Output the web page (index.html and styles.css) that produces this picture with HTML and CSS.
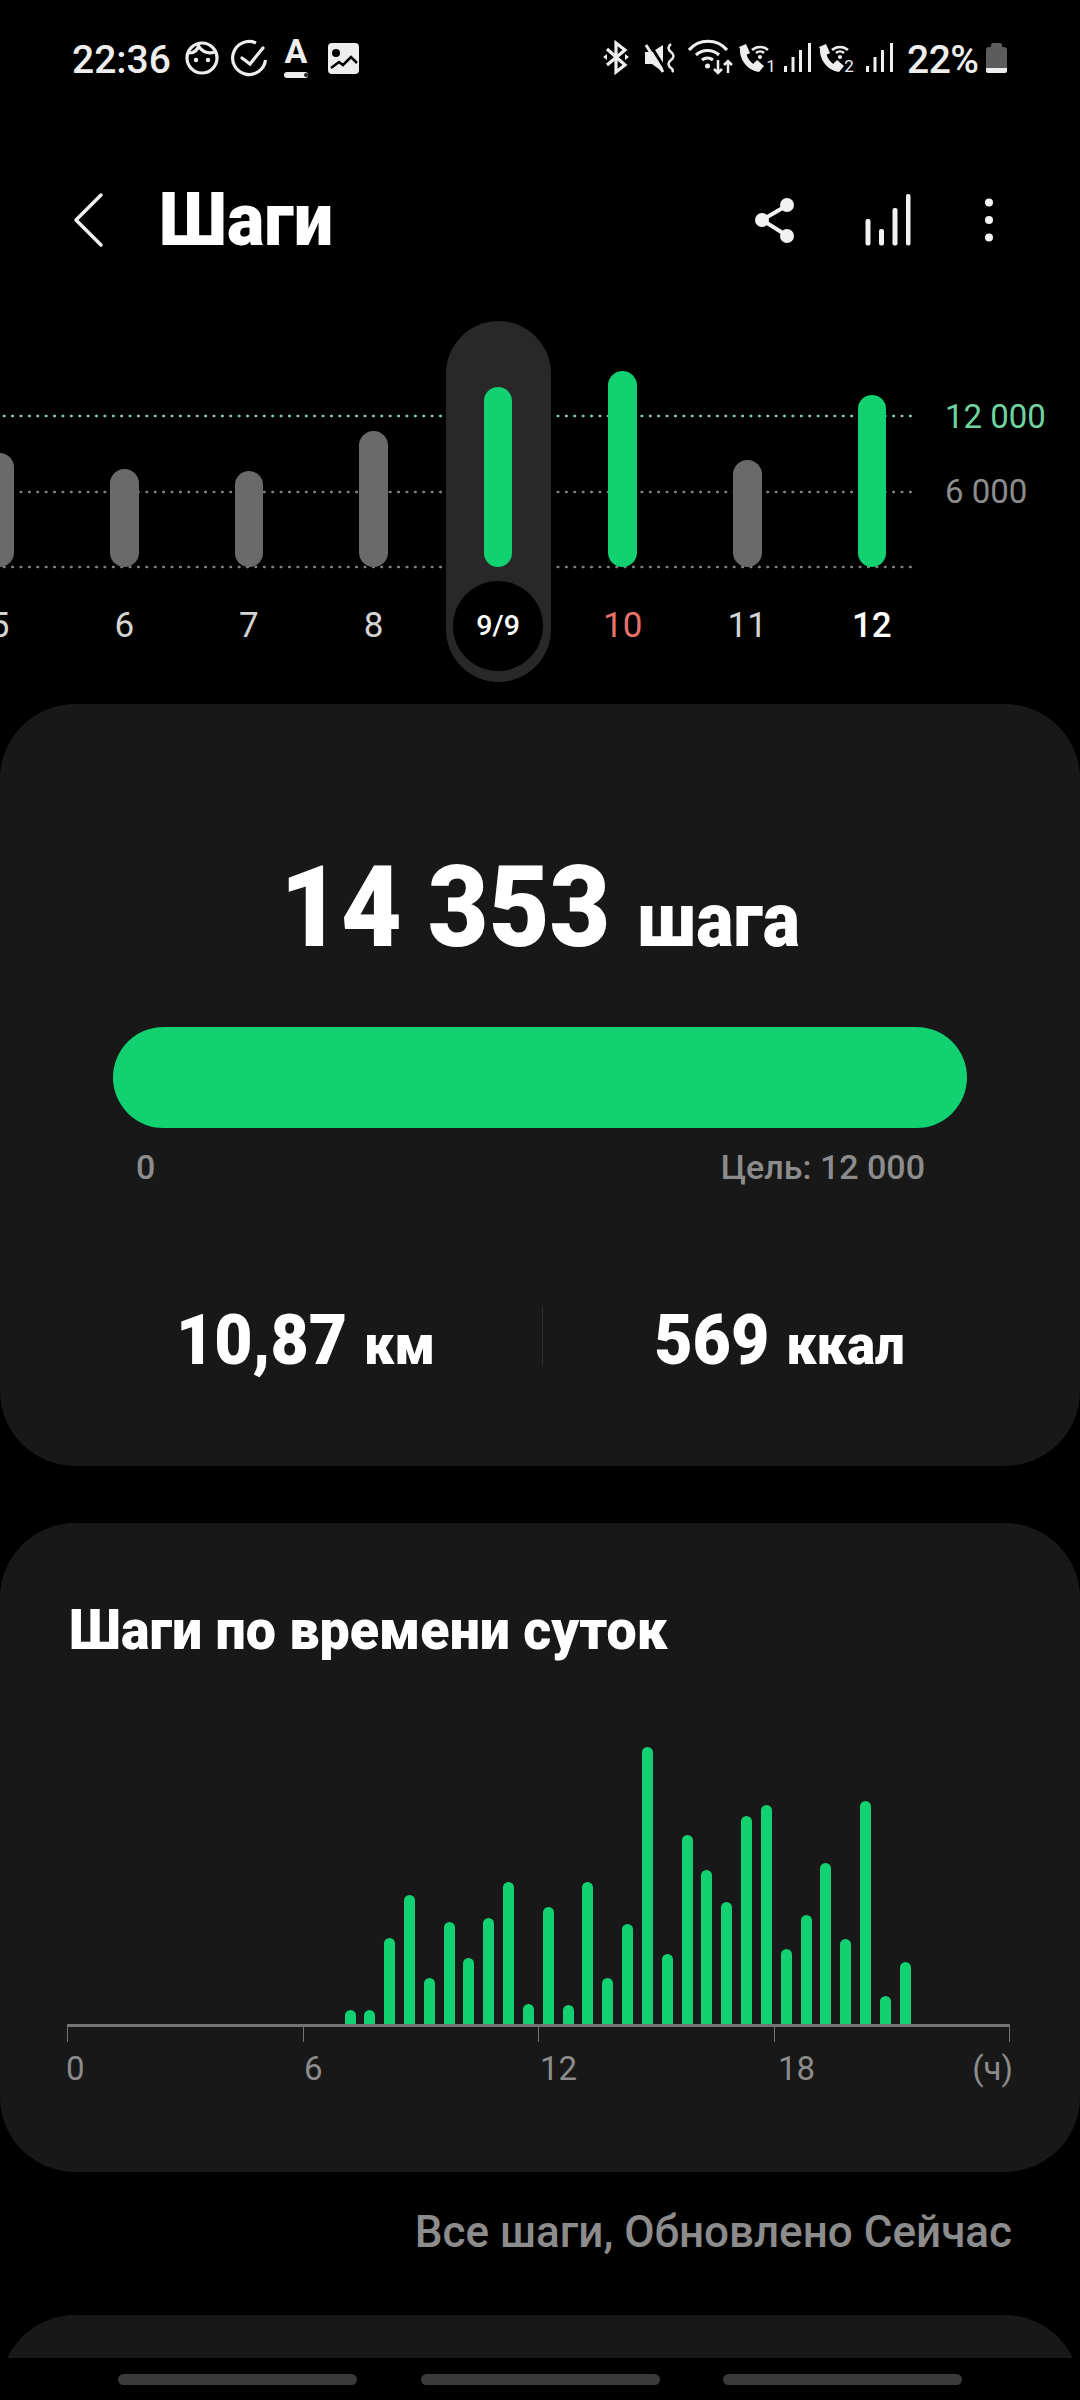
FILE: index.html
```html
<!DOCTYPE html>
<html lang="ru">
<head>
  <meta charset="UTF-8" />
  <title>Шаги</title>
  <meta name="viewport" content="width=device-width, initial-scale=1" />
  <link rel="stylesheet" href="styles.css">
</head>
<body>
  <div class="status">
    <div class="status-left">
      <span class="time">22:36</span>
      <svg class="ico" width="46" height="80" viewBox="178 20 46 80">
        <circle cx="202" cy="58" r="15" class="ln" />
        <path class="ln" d="M189 53C194 53 198 50 199 44M199 47C203 52 209 54 215 52" />
        <circle cx="196" cy="60" r="2.2" class="fl" />
        <circle cx="208" cy="60" r="2.2" class="fl" />
      </svg>
      <svg class="ico" width="51" height="80" viewBox="224 20 51 80">
        <path class="ln" d="M256 43A16.500 16.500 0 1 0 265.500 60" />
        <path class="ln" stroke-linecap="round" d="M242 58L250 64L263 48" />
      </svg>
      <svg class="ico" width="43" height="80" viewBox="275 20 43 80">
        <text x="296" y="63" text-anchor="middle" class="ico-a">A</text>
        <rect x="284" y="72" width="24" height="6" rx="3" class="fl" />
        <circle cx="306" cy="75" r="2" fill="#222" />
      </svg>
      <svg class="ico" width="42" height="80" viewBox="318 20 42 80">
        <rect x="328" y="43" width="31" height="31" rx="4" class="fl" />
        <circle cx="336" cy="53" r="4" fill="#000" />
        <path d="M331 68L339 62L343 65L351 57L357 63" fill="none" stroke="#000" stroke-width="2.500" />
      </svg>
    </div>
    <div class="status-right">
      <svg class="ico" width="41" height="80" viewBox="596 20 41 80">
        <path class="ln" d="M607 49L625 65L616 72V43L625 50L607 65" />
        <path class="fl" d="M603 57L607 54V60ZM629 57L625 54V60Z" />
      </svg>
      <svg class="ico" width="44" height="80" viewBox="637 20 44 80">
        <path class="fl" d="M645 52H652L663 45V72L652 64H645Z" />
        <path d="M649 43L667 72" stroke="#000" stroke-width="3" />
        <path d="M646 45L663 72" stroke="#eee" stroke-width="3" />
        <path class="ln-thin" d="M671 44Q666 48 671 52Q676 56 671 60Q666 64 671 68Q674 70 672 72" />
      </svg>
      <svg class="ico" width="54" height="80" viewBox="681 20 54 80">
        <path class="ln" d="M689 50A25 25 0 0 1 727 50M696 55A17 17 0 0 1 719 55M702 60A9 9 0 0 1 713 60" />
        <circle cx="707.500" cy="66" r="2.500" class="fl" />
        <path class="ln-thin" d="M718 60V73M714 69L718 73L722 69M728 73V61M724 65L728 61L732 65" />
      </svg>
      <svg class="ico" width="44" height="80" viewBox="735 20 44 80">
        <path class="ln-fat" d="M743 48C742 59 750 68 759 69" />
        <path class="fl" d="M739 47L746 44L750 53L744 56ZM752 65L757 60L764 66L759 72Z" />
        <path class="ln-thin" d="M752 50A12 12 0 0 1 768 50M756 53A6 6 0 0 1 764 53" />
        <circle cx="760" cy="57" r="2" class="fl" />
        <text x="771" y="72" text-anchor="middle" class="ico-n">1</text>
      </svg>
      <svg class="ico" width="36" height="80" viewBox="779 20 36 80">
        <path class="fl" d="M784 66h3v6h-3zM791.500 57h3v15h-3zM799 50h3v22h-3zM808 43h3v29h-3z" />
      </svg>
      <svg class="ico" width="46" height="80" viewBox="817 20 46 80">
        <path class="ln-fat" d="M825 48C824 59 832 68 841 69" />
        <path class="fl" d="M821 47L828 44L832 53L826 56ZM834 65L839 60L846 66L841 72Z" />
        <path class="ln-thin" d="M834 50A12 12 0 0 1 850 50M838 53A6 6 0 0 1 846 53" />
        <circle cx="842" cy="57" r="2" class="fl" />
        <text x="851" y="72" text-anchor="middle" class="ico-n">2</text>
      </svg>
      <svg class="ico" width="38" height="80" viewBox="861 20 38 80">
        <path class="fl" d="M866 66h3v6h-3zM873.500 57h3v15h-3zM881 50h3v22h-3zM890 43h3v29h-3z" />
      </svg>
      <span class="batt-text">22%</span>
      <svg class="ico" width="27" height="80" viewBox="983 20 27 80">
        <path fill="#5c5c5c" d="M991 47V45Q991 43 993 43H1000Q1002 43 1002 45V47H1004Q1007 47 1007 50V68H986V50Q986 47 989 47Z" />
        <path class="fl" d="M986 68H1007V71Q1007 73 1005 73H988Q986 73 986 71Z" />
      </svg>
    </div>
  </div>

  <div class="appbar">
    <svg class="ico" width="159" height="60" viewBox="0 190 159 60">
      <path d="M101 195L76 220L101 245" fill="none" stroke="#f2f2f2" stroke-width="3.500" stroke-linecap="round" stroke-linejoin="round" />
    </svg>
    <h1 class="title">Шаги</h1>
    <svg class="ico appbar-actions" width="300" height="60" viewBox="720 190 300 60">
      <path d="M786 206L762 220L786 235" fill="none" stroke="#f2f2f2" stroke-width="4" />
      <circle cx="787" cy="205" r="7" fill="#f2f2f2" />
      <circle cx="762" cy="220" r="7" fill="#f2f2f2" />
      <circle cx="787" cy="236" r="7" fill="#f2f2f2" />
      <g fill="#f2f2f2">
        <rect x="865.500" y="219" width="5" height="26.500" rx="2" />
        <rect x="879" y="229" width="5" height="16.500" rx="2" />
        <rect x="892.500" y="208" width="5" height="37.500" rx="2" />
        <rect x="906" y="194" width="4.500" height="51.500" rx="2" />
        <circle cx="989" cy="202.500" r="4" />
        <circle cx="989" cy="220" r="4" />
        <circle cx="989" cy="237.500" r="4" />
      </g>
    </svg>
  </div>

  <div class="week">
    <div class="dots dots-goal"></div>
    <div class="dots dots-mid"></div>
    <div class="dots dots-base"></div>
    <div class="y-labels">
      <span class="y-goal">12 000</span>
      <span class="y-mid">6 000</span>
    </div>
    <div class="days">
      <div class="day"><div class="plot"><div class="pill" style="height:114px"></div></div><span class="day-num">5</span></div>
      <div class="day"><div class="plot"><div class="pill" style="height:98px"></div></div><span class="day-num">6</span></div>
      <div class="day"><div class="plot"><div class="pill" style="height:96px"></div></div><span class="day-num">7</span></div>
      <div class="day"><div class="plot"><div class="pill" style="height:136px"></div></div><span class="day-num">8</span></div>
      <div class="day day-selected"><div class="plot"><div class="pill pill-done" style="height:180px"></div></div><span class="day-num">9/9</span></div>
      <div class="day"><div class="plot"><div class="pill pill-done" style="height:196px"></div></div><span class="day-num day-sun">10</span></div>
      <div class="day"><div class="plot"><div class="pill" style="height:107px"></div></div><span class="day-num">11</span></div>
      <div class="day"><div class="plot"><div class="pill pill-done" style="height:172px"></div></div><span class="day-num day-today">12</span></div>
    </div>
  </div>

  <div class="card summary">
    <div class="total"><span class="total-num">14 353</span> <span class="total-unit">шага</span></div>
    <div class="goalbar"></div>
    <div class="goal-row"><span>0</span><span>Цель: 12 000</span></div>
    <div class="stats">
      <div class="stat"><span class="stat-num">10,87</span> <span class="stat-unit">км</span></div>
      <div class="stat-line"></div>
      <div class="stat"><span class="stat-num">569</span> <span class="stat-unit">ккал</span></div>
    </div>
  </div>

  <div class="card hourly">
    <h2 class="hourly-title">Шаги по времени суток</h2>
    <div class="bars">
      <i style="height:14px"></i><i style="height:14px"></i><i style="height:86px"></i><i style="height:129px"></i><i style="height:46px"></i>
      <i style="height:102px"></i><i style="height:66px"></i><i style="height:106px"></i><i style="height:142px"></i><i style="height:20px"></i>
      <i style="height:117px"></i><i style="height:19px"></i><i style="height:142px"></i><i style="height:46px"></i><i style="height:100px"></i>
      <i style="height:277px"></i><i style="height:70px"></i><i style="height:189px"></i><i style="height:154px"></i><i style="height:122px"></i>
      <i style="height:208px"></i><i style="height:219px"></i><i style="height:75px"></i><i style="height:109px"></i><i style="height:161px"></i>
      <i style="height:85px"></i><i style="height:223px"></i><i style="height:28px"></i><i style="height:62px"></i>
    </div>
    <div class="axis"><b></b><b></b><b></b><b></b><b class="tick-end"></b></div>
    <div class="axis-labels">
      <span class="hour">0</span><span class="hour hour-short">6</span><span class="hour">12</span><span class="hour hour-last">18</span><span>(ч)</span>
    </div>
  </div>

  <p class="updated">Все шаги, Обновлено Сейчас</p>

  <div class="next-wrap"><div class="card next"></div></div>

  <div class="navbar"><span></span><span></span><span></span></div>
</body>
</html>
```

FILE: styles.css
```css
html, body { margin: 0; padding: 0; }
body { width: 1080px; height: 2400px; overflow: hidden; background: #000; font-family: Roboto, sans-serif; color: #fff; }
h1, h2, p { margin: 0; }

.ico { display: block; flex: none; }
.ln { fill: none; stroke: #eee; stroke-width: 3.2; }
.ln-thin { fill: none; stroke: #eee; stroke-width: 2.5; }
.ln-fat { fill: none; stroke: #eee; stroke-width: 6; }
.fl { fill: #eee; }
.ico-a { font: 700 34px Roboto, sans-serif; fill: #eee; }
.ico-n { font: 400 17px Roboto, sans-serif; fill: #eee; }

.status { display: flex; justify-content: space-between; height: 80px; margin-top: 20px; padding: 0 70px 0 72px; }
.status-left, .status-right { display: flex; align-items: center; }
.time { width: 106px; font-size: 39px; font-weight: 500; color: #eee; line-height: 80px; }
.batt-text { width: 84px; padding-left: 8px; box-sizing: border-box; font-size: 39px; font-weight: 500; letter-spacing: -0.5px; color: #eee; line-height: 80px; }

.appbar { display: flex; align-items: center; height: 221px; padding: 40px 60px 21px 0; box-sizing: border-box; }
.title { font-size: 74px; font-weight: 900; line-height: 80px; transform: scaleX(0.95); transform-origin: left center; }
.appbar-actions { margin-left: auto; }

.week { position: relative; height: 361px; margin-bottom: 22px; font-size: 35px; }
.dots { position: absolute; left: 0; width: 913px; height: 4px; background-size: 8.4px 4px; }
.dots-goal { top: 93px; background-image: radial-gradient(circle, #7fcfa8 1.2px, transparent 1.7px); }
.dots-mid { top: 169px; background-image: radial-gradient(circle, #808080 1.2px, transparent 1.7px); }
.dots-base { top: 244px; background-image: radial-gradient(circle, #808080 1.2px, transparent 1.7px); }
.y-labels { position: absolute; left: 945px; top: 76px; display: flex; flex-direction: column; gap: 35px; font-size: 33px; line-height: 40px; }
.y-goal { color: #6fd39d; }
.y-mid { color: #8c8c8c; }

.days { display: flex; margin-left: -62.6px; position: relative; }
.day { position: relative; width: 124.6px; flex: none; display: flex; flex-direction: column; align-items: center; }
.plot { position: relative; height: 246px; display: flex; align-items: flex-end; }
.pill { width: 28.5px; border-radius: 15px; background: #6a6a6a; }
.pill-done { background: #12d170; }
.day-num { position: relative; width: 90px; height: 90px; margin-top: 14px; line-height: 90px; text-align: center; color: #d4d4d4; }
.day-sun { color: #e5726a; }
.day-today { color: #fff; font-weight: 500; }
.day-selected::before { content: ""; position: absolute; left: 10px; top: 0; width: 105px; height: 361px; border-radius: 53px; background: #282828; }
.day-selected .day-num { border-radius: 50%; background: #000; color: #fff; font-size: 28.5px; font-weight: 500; }

.card { background: #181818; border-radius: 75px; }

.summary { height: 762px; padding-top: 138px; box-sizing: border-box; }
.total { display: flex; justify-content: center; align-items: baseline; gap: 30px; height: 130px; line-height: 130px; font-weight: 900; transform: scaleX(0.92); }
.total-num { font-size: 114px; }
.total-unit { font-size: 76px; }
.goalbar { height: 101px; margin: 55px 113px 0; border-radius: 51px; background: #12d170; }
.goal-row { display: flex; justify-content: space-between; margin: 19px 155px 0 136px; font-size: 34px; font-weight: 500; line-height: 40px; color: #8c8c8c; }
.stats { display: grid; grid-template-columns: 1fr 1px 1fr; margin-top: 113px; padding: 0 64px 0 69px; }
.stat { display: flex; justify-content: center; align-items: baseline; gap: 18px; height: 80px; line-height: 80px; font-weight: 900; transform: scaleX(0.945); }
.stat-num { font-size: 70px; }
.stat-unit { font-size: 56px; }
.stat-line { height: 60px; margin-top: 6px; background: #2c2c2c; }

.hourly { height: 649px; margin-top: 57px; padding: 72px 0 0 69px; box-sizing: border-box; }
.hourly-title { font-size: 56px; font-weight: 900; line-height: 70px; transform: scaleX(0.96); transform-origin: left center; }
.bars { display: flex; align-items: flex-end; gap: 8.83px; height: 359px; padding-left: 275.5px; }
.bars i { width: 11px; flex: none; border-radius: 6px 6px 0 0; background: #12d170; }
.axis { display: flex; gap: 235px; width: 943px; height: 15px; margin-left: -2px; border-top: 3px solid #737373; }
.axis b { display: block; width: 3px; height: 15px; background: #737373; }
.axis .tick-end { margin-left: auto; }
.axis-labels { display: flex; width: 947px; margin: 7px 0 0 -3px; font-size: 33px; line-height: 40px; color: #8c8c8c; }
.hour { width: 238px; flex: none; }
.hour-short { width: 236px; }
.hour-last { width: auto; flex: 1; }

.updated { margin-top: 35px; padding-right: 68px; text-align: right; font-size: 44px; font-weight: 500; line-height: 50px; color: #8c8c8c; }

.next-wrap { height: 43px; margin-top: 58px; overflow: hidden; }
.next { height: 200px; }

.navbar { display: flex; justify-content: center; gap: 63.5px; padding-top: 16px; }
.navbar span { width: 239px; height: 11px; border-radius: 6px; background: #3a3a3a; }
```
